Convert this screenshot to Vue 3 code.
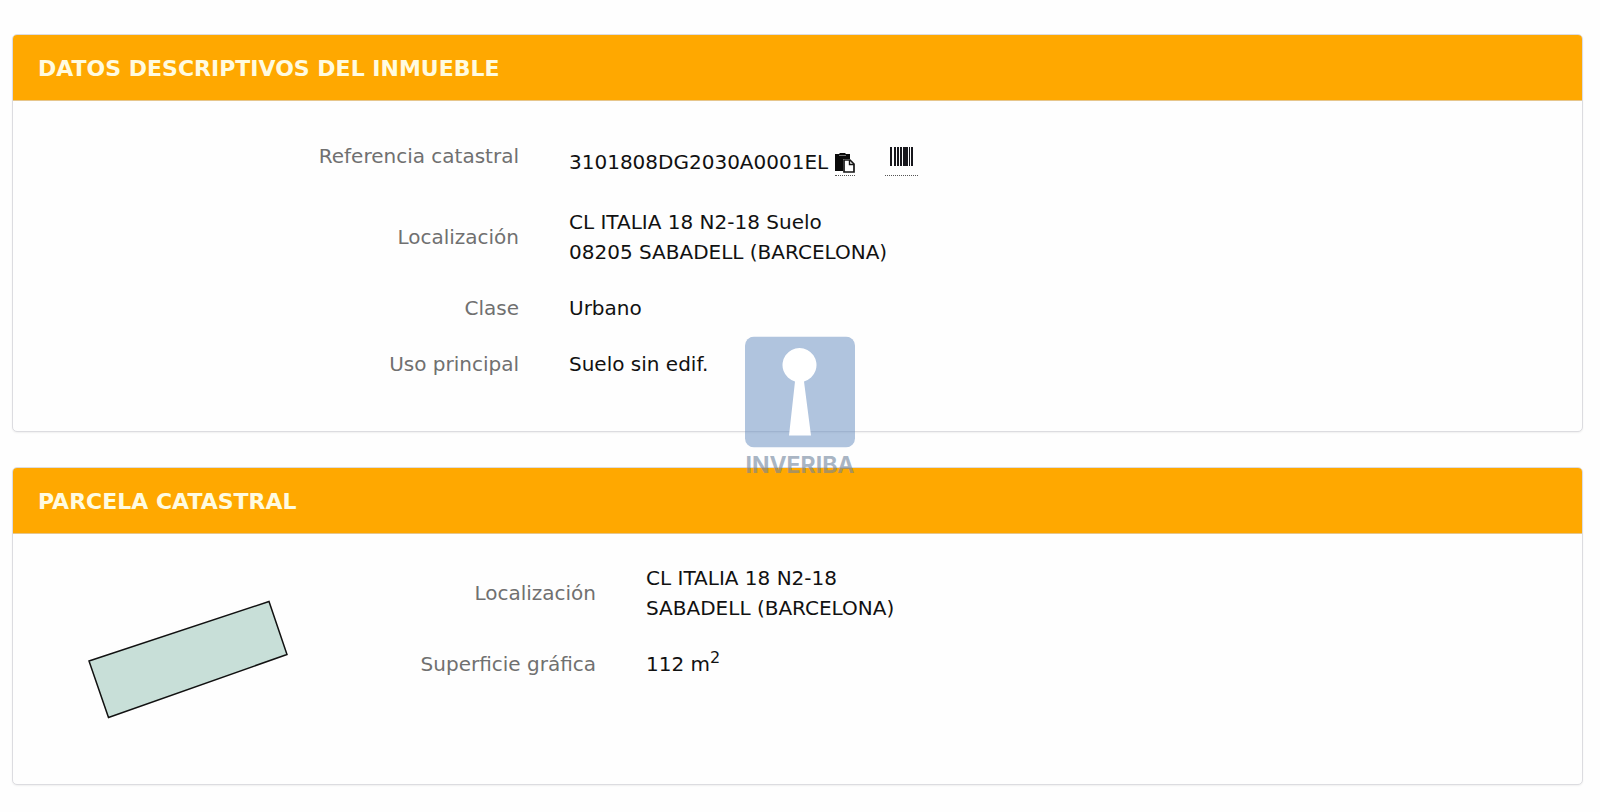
<script setup>
const propertyRows = [
  { label: 'Localización', lines: ['CL ITALIA 18 N2-18 Suelo', '08205 SABADELL (BARCELONA)'] },
  { label: 'Clase', lines: ['Urbano'] },
  { label: 'Uso principal', lines: ['Suelo sin edif.'] },
]
const parcelLines = ['CL ITALIA 18 N2-18', 'SABADELL (BARCELONA)']
</script>

<template>
  <main class="page">
    <section class="panel">
      <h2 class="panel-title">DATOS DESCRIPTIVOS DEL INMUEBLE</h2>
      <div class="panel-body">
        <dl class="data">
          <div class="row reference">
            <dt>Referencia catastral</dt>
            <dd class="reference-value">
              <span>3101808DG2030A0001EL</span>
              <button class="tool copy" type="button" aria-label="Copiar referencia catastral">
                <svg width="20" height="20" viewBox="0 0 20 20" aria-hidden="true">
                  <path d="M0 1h4l1-1h5l1 1h4v5H8v12H0z" fill="#0a0a0a" />
                  <path d="M4 2.5h7" stroke="#777" />
                  <path d="M9 7h6l4 4v8H9z" fill="#fff" stroke="#151515" stroke-width="1.7" />
                  <path d="M14.500 7v4.500H19" fill="none" stroke="#151515" stroke-width="1.400" />
                </svg>
              </button>
              <button class="tool barcode" type="button" aria-label="Código de barras">
                <svg width="23" height="19" viewBox="0 0 23 19" aria-hidden="true">
                  <g fill="#17171c">
                    <rect x="0" width="2" height="19" />
                    <rect x="4" width="2" height="19" />
                    <rect x="7" width="2" height="19" />
                    <rect x="10" width="2" height="19" />
                    <rect x="13" width="5" height="19" />
                    <rect x="19" width="1" height="19" />
                    <rect x="21" width="2" height="19" />
                  </g>
                </svg>
              </button>
            </dd>
          </div>
          <div v-for="row in propertyRows" :key="row.label" class="row">
            <dt>{{ row.label }}</dt>
            <dd><span v-for="line in row.lines" :key="line" class="line">{{ line }}</span></dd>
          </div>
        </dl>
      </div>
    </section>

    <section class="panel">
      <h2 class="panel-title">PARCELA CATASTRAL</h2>
      <div class="panel-body parcel">
        <div class="parcel-map">
          <svg width="250" height="218" viewBox="37 550 250 218" overflow="visible" role="img" aria-label="Plano de la parcela">
            <path d="M89 661 269 601.500 287 654.500 108.500 717.500z" fill="#c8dfd8" stroke="#111" stroke-width="1.500" />
          </svg>
        </div>
        <dl class="data">
          <div class="row">
            <dt>Localización</dt>
            <dd><span v-for="line in parcelLines" :key="line" class="line">{{ line }}</span></dd>
          </div>
          <div class="row">
            <dt>Superficie gráfica</dt>
            <dd>112 m<sup>2</sup></dd>
          </div>
        </dl>
      </div>
    </section>

    <div class="watermark">
      <svg width="110" height="111" viewBox="0 0 110 111" aria-hidden="true">
        <rect width="110" height="111" rx="9" fill="#6189be" fill-opacity=".5" />
        <path d="M50 45A17 17 0 1 1 59 45L66 99H44z" fill="#fff" />
      </svg>
      <span class="brand">INVERIBA</span>
    </div>
  </main>
</template>

<style>
body {
  margin: 0;
  background: #fefefe;
}
</style>

<style scoped>
.page {
  position: relative;
  box-sizing: border-box;
  min-height: 100vh;
  padding: 34px 17px 24px 12px;
  display: flex;
  flex-direction: column;
  gap: 35px;
  font-family: Verdana, "DejaVu Sans", sans-serif;
  font-size: 20px;
  line-height: 30px;
  color: #111;
}
.panel {
  border: 1px solid #dcdce0;
  border-radius: 5px;
  background: #fefefe;
  box-shadow: 0 1px 2px rgba(0, 0, 0, 0.06);
}
.panel-title {
  margin: 0;
  padding: 19px 25px 16px;
  border-bottom: 1px solid #e6c68c;
  border-radius: 4px 4px 0 0;
  background: #ffa800;
  color: #fffbe0;
  font-size: 22px;
  line-height: 30px;
  font-weight: 700;
}
.panel-body {
  padding: 18px 24px 39px;
}
.data {
  margin: 0;
}
.row {
  display: grid;
  grid-template-columns: 1fr 2fr;
  align-items: center;
  padding: 13px 0;
}
dt {
  padding-right: 25px;
  text-align: right;
  color: #707070;
}
dd {
  margin: 0;
  padding-left: 25px;
}
.line {
  display: block;
}
.reference {
  align-items: start;
  padding: 22px 0 13px;
}
.reference-value {
  display: flex;
  align-items: flex-end;
  height: 40px;
}
.reference-value span {
  margin-bottom: 4px;
}
.tool {
  display: flex;
  padding: 0;
  border: 0;
  border-bottom: 1px dotted #555;
  background: none;
  cursor: pointer;
}
.copy {
  margin: 0 0 5px 7px;
  padding-bottom: 2px;
}
.barcode {
  margin: 0 0 5px 30px;
  padding: 0 5px 9px;
}
.parcel {
  display: flex;
  padding-top: 16px;
  padding-bottom: 16px;
}
.parcel-map {
  flex: 0 0 20%;
}
.parcel-map svg {
  display: block;
}
.parcel .data {
  flex: 1;
}
.parcel .row {
  grid-template-columns: 23fr 77fr;
}
sup {
  font-size: 16px;
  line-height: 0;
}
.watermark {
  position: absolute;
  top: 50%;
  left: 50%;
  transform: translate(-50%, -50%);
  display: flex;
  flex-direction: column;
  align-items: center;
  gap: 6px;
  pointer-events: none;
}
.watermark svg {
  display: block;
}
.brand {
  font-family: Inter, sans-serif;
  font-size: 23px;
  line-height: 22px;
  font-weight: 700;
  color: rgba(112, 132, 156, 0.6);
}
</style>
